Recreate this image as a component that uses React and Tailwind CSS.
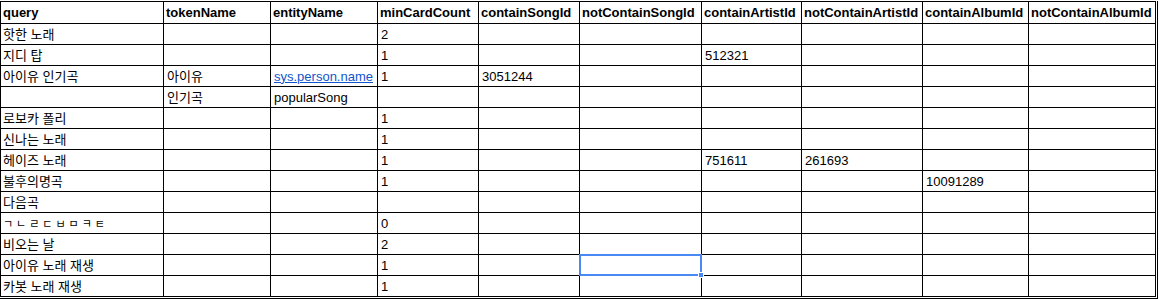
const columns = [
  { name: "query", width: "w-[163px]" },
  { name: "tokenName", width: "w-[107px]" },
  { name: "entityName", width: "w-[107px]" },
  { name: "minCardCount", width: "w-[101px]" },
  { name: "containSongId", width: "w-[101px]" },
  { name: "notContainSongId", width: "w-[122px]" },
  { name: "containArtistId", width: "w-[100px]" },
  { name: "notContainArtistId", width: "w-[121px]" },
  { name: "containAlbumId", width: "w-[106px]" },
  { name: "notContainAlbumId", width: "w-[127px]" },
];

const rows = [
  ["핫한 노래", "", "", "2"],
  ["지디 탑", "", "", "1", "", "", "512321"],
  ["아이유 인기곡", "아이유", { link: "sys.person.name" }, "1", "3051244"],
  ["", "인기곡", "popularSong", ""],
  ["로보카 폴리", "", "", "1"],
  ["신나는 노래", "", "", "1"],
  ["헤이즈 노래", "", "", "1", "", "", "751611", "261693"],
  ["불후의명곡", "", "", "1", "", "", "", "", "10091289"],
  ["다음곡", "", "", ""],
  [{ jamo: "ﾡﾤﾩﾧﾲﾱﾻﾼ" }, "", "", "0"],
  ["비오는 날", "", "", "2"],
  ["아이유 노래 재생", "", "", "1"],
  ["카봇 노래 재생", "", "", "1"],
];

// selected cell: row 11 (아이유 노래 재생), column notContainSongId
const selected = { row: 11, col: 5 };

function CellContent({ value }) {
  if (value && typeof value === "object" && value.link) {
    return <span className="text-[#1155cc] underline">{value.link}</span>;
  }
  if (value && typeof value === "object" && value.jamo) {
    return <span className="text-[11px] tracking-[3px]">{value.jamo}</span>;
  }
  return value || "";
}

export default function App() {
  return (
    <div className="bg-white w-[1159px] h-[299px] pt-px">
      <div className="w-[1158px] border-r border-b border-black pr-px pb-px">
        <table
          className="table-fixed border-collapse w-[1156px] text-[13px] text-black leading-none"
          style={{ fontFamily: '"Liberation Sans", Arial, "Noto Sans CJK KR", sans-serif' }}
        >
          <colgroup>
            {columns.map((c) => (
              <col key={c.name} className={c.width} />
            ))}
          </colgroup>
          <thead>
            <tr>
              {columns.map((c) => (
                <th
                  key={c.name}
                  className="h-[22px] border border-black px-[2px] text-left font-bold whitespace-nowrap overflow-hidden"
                >
                  {c.name}
                </th>
              ))}
            </tr>
          </thead>
          <tbody>
            {rows.map((r, ri) => (
              <tr key={ri}>
                {columns.map((c, ci) => {
                  const isSel = ri === selected.row && ci === selected.col;
                  return (
                    <td
                      key={c.name}
                      className={`h-[21px] border border-black px-[3px] whitespace-nowrap ${ci === 0 ? "pl-[2px]" : ""} ${isSel ? "relative" : ""}`}
                    >
                      <CellContent value={r[ci]} />
                      {isSel && (
                        <div className="absolute -top-px -left-px -right-px -bottom-px border-2 border-[#4a89f3]">
                          <div className="absolute -right-[4px] -bottom-[4px] w-[6px] h-[6px] bg-[#4a89f3] border border-white" />
                        </div>
                      )}
                    </td>
                  );
                })}
              </tr>
            ))}
          </tbody>
        </table>
      </div>
    </div>
  );
}
